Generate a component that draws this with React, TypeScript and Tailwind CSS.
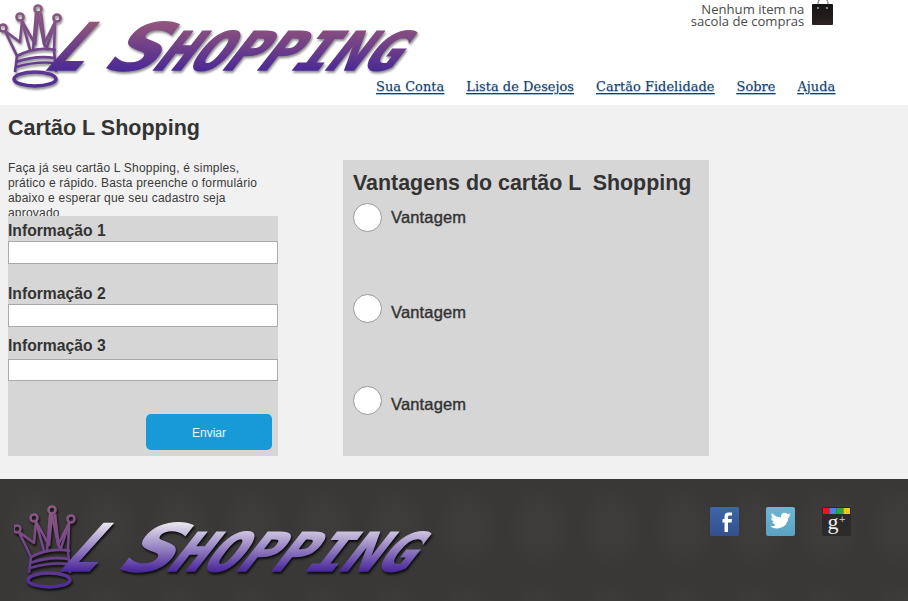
const sans = { fontFamily: '"Liberation Sans", Arial, sans-serif' };

function Logo({ id, top, bottom, shadow }: { id: string; top: string; bottom: string; shadow: string }) {
  const word = '"DejaVu Sans Mono", "Liberation Mono", monospace';
  return (
    <svg width="420" height="90" viewBox="0 0 420 90" className="block shrink-0" style={{ filter: `drop-shadow(1px 2px 1px ${shadow})` }}>
      <defs>
        <linearGradient id={`${id}s`} gradientUnits="userSpaceOnUse" x1="0" y1="-49" x2="0" y2="0">
          <stop offset="0" stopColor={top} />
          <stop offset="1" stopColor={bottom} />
        </linearGradient>
        <linearGradient id={`${id}c`} gradientUnits="userSpaceOnUse" x1="0" y1="5" x2="0" y2="88">
          <stop offset="0" stopColor="#8f5a80" />
          <stop offset="0.55" stopColor="#70448a" />
          <stop offset="1" stopColor="#4f2c98" />
        </linearGradient>
      </defs>
      <g fill="none" stroke={`url(#${id}c)`} strokeWidth="2.6" strokeLinejoin="round">
        <circle cx="3" cy="28" r="3.5" />
        <circle cx="20" cy="17" r="3.5" />
        <circle cx="38" cy="9" r="3.5" />
        <circle cx="57" cy="18" r="3.5" />
        <path d="M5 31 L17 56 M22 21 L30 50 M36 13 L33 50 M41 13 L45 47 M55 22 L46 50 M17 56 Q36 46 56 50" />
        <path d="M5 31 L20 42 L22 21 L35 44 L38 13 L44 44 L55 22 L54 50" />
        <path d="M17 56 L15 72 M54 50 L56 72" />
        <path d="M16 62 Q36 55 55 58 M16 67 Q36 61 55 63" />
        <ellipse cx="35" cy="79" rx="21" ry="7" strokeWidth="3.5" />
      </g>
      <g fontFamily={word} fontWeight="700" fill={`url(#${id}s)`} stroke={`url(#${id}s)`} strokeWidth="1.6">
        <text transform="translate(40 70) skewX(-42)" fontSize="65" textLength="38" lengthAdjust="spacingAndGlyphs">L</text>
        <text transform="translate(100 70) skewX(-38)" fontSize="65" textLength="52" lengthAdjust="spacingAndGlyphs">S</text>
        <text transform="translate(150 70) skewX(-38)" fontSize="53" textLength="242" lengthAdjust="spacingAndGlyphs">HOPPING</text>
      </g>
    </svg>
  );
}

function Bag() {
  return (
    <svg width="24" height="27" viewBox="0 0 24 27" className="block">
      <defs>
        <linearGradient id="bag" x1="0" y1="0" x2="0" y2="1">
          <stop offset="0" stopColor="#141414" />
          <stop offset="1" stopColor="#2e2222" />
        </linearGradient>
      </defs>
      <path d="M7 8 V4 Q7 0 12 0 Q17 0 17 4 V8" fill="none" stroke="#666" strokeWidth="1" />
      <rect x="1" y="5" width="21" height="21" rx="1" fill="url(#bag)" />
      <circle cx="7" cy="9" r="0.9" fill="#bbb" />
      <circle cx="16" cy="9" r="0.9" fill="#bbb" />
    </svg>
  );
}

function Facebook() {
  return (
    <svg width="29" height="30" viewBox="0 0 29 30" className="block">
      <defs>
        <linearGradient id="fb" x1="0" y1="0" x2="0" y2="1">
          <stop offset="0" stopColor="#3d66a8" />
          <stop offset="1" stopColor="#34508c" />
        </linearGradient>
      </defs>
      <rect width="29" height="29" rx="2" fill="url(#fb)" />
      <path d="M18 25 V15.5 H21.5 L22 12 H18 V10 Q18 8.6 19.5 8.6 H22 V5.5 H18.8 Q14.5 5.5 14.5 9.6 V12 H12.5 V15.5 H14.5 V25 Z" fill="#fff" />
    </svg>
  );
}

function Twitter() {
  return (
    <svg width="29" height="30" viewBox="0 0 29 30" className="block">
      <defs>
        <linearGradient id="tw" x1="0" y1="0" x2="0" y2="1">
          <stop offset="0" stopColor="#6eb7d3" />
          <stop offset="1" stopColor="#5aa2c2" />
        </linearGradient>
      </defs>
      <rect width="29" height="29" rx="2" fill="url(#tw)" />
      <path d="M25 7.5 Q23.6 8.2 22.4 8.4 Q23.8 7.5 24.3 6 Q22.9 6.8 21.5 7.1 Q20 5.5 18 5.7 Q15 6.2 15 9.5 Q15 10 15.1 10.4 Q9.5 10.1 5.8 6 Q4.6 9 7 11.4 Q6 11.4 5 10.9 Q5.1 13.8 8 15 Q7 15.2 6 15 Q7 17.4 9.8 17.7 Q7.5 19.6 4 19.2 Q8 22 13 21.2 Q21.5 19.5 22.6 10.2 Q24 9.2 25 7.5 Z" fill="#fff" />
    </svg>
  );
}

function GooglePlus() {
  return (
    <svg width="29" height="30" viewBox="0 0 29 30" className="block">
      <rect width="29" height="29" rx="2" fill="#2a2a2a" />
      <rect x="1" y="1" width="6.5" height="6" fill="#f0121a" />
      <rect x="7.5" y="1" width="7" height="6" fill="#4a82ea" />
      <rect x="14.5" y="1" width="7" height="6" fill="#2fa53f" />
      <rect x="21.5" y="1" width="6.5" height="6" fill="#efc61c" />
      <text x="5.5" y="22" fontFamily='"Liberation Serif", serif' fontSize="22" fill="#eee">g</text>
      <text x="17" y="16" fontFamily='"Liberation Sans", sans-serif' fontSize="11" fill="#bbb">+</text>
    </svg>
  );
}

function Field({ label, mt, gap, h }: { label: string; mt: string; gap: string; h: string }) {
  return (
    <div className={mt}>
      <div className="text-[15.7px] leading-[18px] font-bold text-[#333]">{label}</div>
      <div className={`${gap} ${h} bg-white border border-[#a9a9a9]`} />
    </div>
  );
}

function Vantagem({ mt, drop }: { mt: string; drop: string }) {
  return (
    <div className={`flex items-start gap-[9px] ${mt}`}>
      <div className="w-[29px] h-[29px] rounded-full bg-white border border-[#999] shrink-0" />
      <div className={`text-[16.5px] leading-[18px] text-[#333] tracking-[0.15px] [-webkit-text-stroke:0.4px_#333] ${drop}`}>Vantagem</div>
    </div>
  );
}

export default function App() {
  const navFont = { fontFamily: '"DejaVu Serif", serif', textShadow: '0 1px 1px rgba(70,120,170,.5)' };
  return (
    <div className="w-[908px] h-[601px] overflow-hidden bg-[#f1f1f1] flex flex-col" style={sans}>
      <header className="h-[105px] bg-white flex shrink-0">
        <Logo id="a" top="#95577a" bottom="#4c2a96" shadow="rgba(0,0,0,.45)" />
        <div className="flex-1 flex flex-col items-end pr-[74px] -ml-[44px]">
          <div className="flex items-start gap-[7px] h-[78px]">
            <div className="text-right text-[13.1px] leading-[12px] text-[#4a4a4a] pt-[3px]" style={{ fontFamily: '"Open Sans", sans-serif' }}>
              Nenhum item na<br />sacola de compras
            </div>
            <div className="-mt-[1px]"><Bag /></div>
          </div>
          <nav className="flex gap-[22px] whitespace-nowrap text-[13px] leading-[18px] text-[#123f6b] underline underline-offset-2" style={navFont}>
            <a>Sua Conta</a>
            <a>Lista de Desejos</a>
            <a>Cartão Fidelidade</a>
            <a>Sobre</a>
            <a>Ajuda</a>
          </nav>
        </div>
      </header>

      <main className="h-[374px] shrink-0 px-[8px] pt-[10px]">
        <h1 className="text-[21.5px] leading-[26px] font-bold text-[#333]">Cartão L Shopping</h1>
        <div className="flex gap-[65px] mt-[19px]">
          <div className="w-[270px] h-[296px] flex flex-col">
            <p className="h-[56px] overflow-hidden text-[12px] leading-[15px] text-[#3a3a3a] tracking-[0.2px] pt-[1px] whitespace-nowrap">
              Faça já seu cartão L Shopping, é simples,<br />prático e rápido. Basta preenche o formulário<br />abaixo e esperar que seu cadastro seja<br />aprovado
            </p>
            <form className="h-[240px] bg-[#d6d6d6] flex flex-col pt-[6px]">
              <Field label="Informação 1" mt="mt-0" gap="mt-[1px]" h="h-[23px]" />
              <Field label="Informação 2" mt="mt-[21px]" gap="mt-[1px]" h="h-[23px]" />
              <Field label="Informação 3" mt="mt-[10px]" gap="mt-[4px]" h="h-[22px]" />
              <div className="flex justify-end pr-[6px] mt-[33px]">
                <button type="button" className="w-[126px] h-[36px] pt-[2px] rounded-[5px] bg-[#189ad6] text-white/90 text-[12px]">Enviar</button>
              </div>
            </form>
          </div>
          <section className="w-[366px] h-[296px] bg-[#d6d6d6] px-[10px] pt-[9px]">
            <h2 className="text-[21.4px] leading-[26px] font-bold text-[#333] whitespace-pre pt-[1px] -mb-[1px]">Vantagens do cartão L  Shopping</h2>
            <Vantagem mt="mt-[8px]" drop="mt-[5px]" />
            <Vantagem mt="mt-[62px]" drop="mt-[9px]" />
            <Vantagem mt="mt-[63px]" drop="mt-[9px]" />
          </section>
        </div>
      </main>

      <footer className="flex-1 bg-[#393837] bg-[radial-gradient(ellipse_at_center,#3d3c3b_0,#3d3c3b_25%,transparent_65%)] bg-[length:72px_96px] flex pl-[14px] pt-[22px]">
        <Logo id="b" top="#ece9f0" bottom="#4a289a" shadow="rgba(0,0,0,.8)" />
        <div className="flex gap-[27px] ml-[276px] pt-[6px] h-fit">
          <Facebook />
          <Twitter />
          <GooglePlus />
        </div>
      </footer>
    </div>
  );
}
